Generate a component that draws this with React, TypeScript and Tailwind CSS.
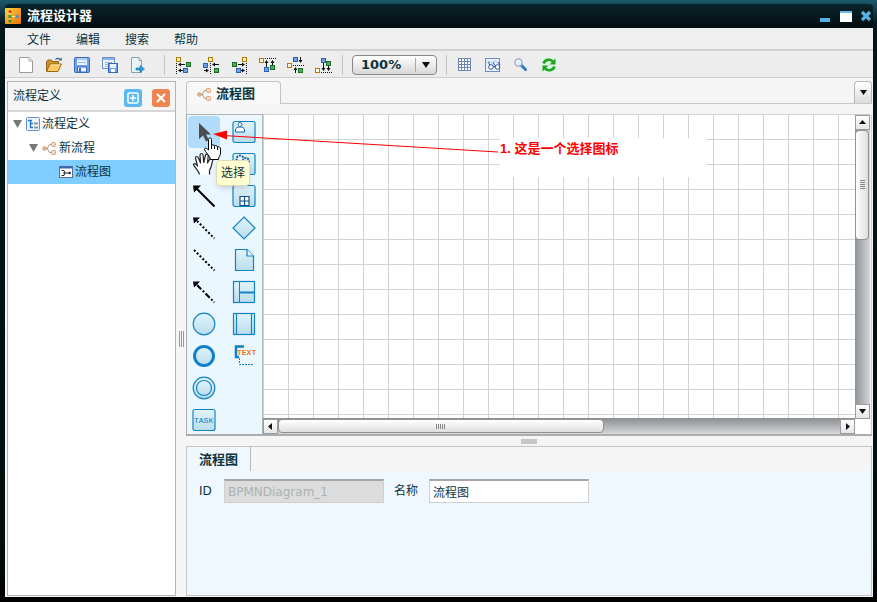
import type { ReactNode } from "react";

type Pt = [number, number];

/* ---------- toolbar drawings ---------- */

function Icon({ children, size = 16 }: { children: ReactNode; size?: number }) {
  return (
    <svg width={size} height={size} viewBox={`0 0 ${size} ${size}`} className="block shrink-0" aria-hidden="true">
      {children}
    </svg>
  );
}

function NewIcon() {
  return (
    <Icon>
      <path d="M1.500 .5H11L14.500 4V15.500H1.500Z" fill="#fff" stroke="#9a9a9a" />
      <path d="M11 .5V4H14.500" fill="#e8e8e8" stroke="#b0b0b0" />
    </Icon>
  );
}

function OpenIcon() {
  return (
    <Icon>
      <path d="M.5 14V4.500L2 3H5.500L7 4.500H12.500V7" fill="#c99227" stroke="#8f6414" />
      <path d="M.5 14.500L4 7H15.500L12 14.500Z" fill="#fbc95f" stroke="#96681a" />
      <path d="M4.800 8H14" stroke="#ffeab5" />
      <path d="M9.500 2.500C11 .8 13 .8 14.500 3" fill="none" stroke="#3d6490" strokeWidth="1.2" />
      <path d="M12.500 3.500H15.800V.5Z" fill="#3d6490" />
    </Icon>
  );
}

function SaveIcon() {
  return (
    <Icon>
      <rect x=".5" y=".5" width="15" height="15" rx="1" fill="#6fa2ee" stroke="#3a68bb" />
      <rect x="3" y="1" width="10" height="7" fill="#e8f3ff" />
      <rect x="3" y="1" width="10" height="2" fill="#a8cef8" />
      <path d="M4 5.500H12" stroke="#9cc0ee" />
      <rect x="3.500" y="10" width="9" height="5" fill="#f3f6fa" stroke="#3a68bb" />
      <rect x="5" y="11" width="2" height="4" fill="#3a68bb" />
    </Icon>
  );
}

function SaveAllIcon() {
  return (
    <Icon>
      <rect x=".5" y=".5" width="12" height="11" fill="#eaf4ff" stroke="#7192c8" />
      <path d="M1 2H12" stroke="#8bb1ea" strokeWidth="2" />
      <path d="M3 5.500H10M3 7.500H7M3 9.500H6" stroke="#9db4da" />
      <rect x="6.500" y="6.500" width="9" height="9" fill="#6c9ce8" stroke="#3c65b4" />
      <rect x="8" y="7" width="6" height="4" fill="#e9f3ff" />
      <rect x="9" y="12" width="4" height="3" fill="#fff" />
    </Icon>
  );
}

function ExportIcon() {
  return (
    <Icon>
      <path d="M1.500 .5H9L11.500 3V15.500H1.500Z" fill="#e9f4f6" stroke="#8aa0a8" />
      <path d="M9 .5V3.500H11.500" fill="#fff" stroke="#8aa0a8" />
      <path d="M6 11H10V8.500L14.500 12L10 15.500V13H6Z" fill="#2e9bdc" stroke="#1673ad" strokeWidth=".6" />
    </Icon>
  );
}

type AlignProps = { o: Pt; b: Pt; g: Pt; guide: string; shafts: string; heads: string };

function AlignIcon({ o, b, g, guide, shafts, heads }: AlignProps) {
  return (
    <Icon size={17}>
      <path d={guide} stroke="#111" strokeDasharray="1 1" />
      <path d={shafts} stroke="#111" />
      <path d={heads} fill="#111" />
      <rect x={o[0] + 0.5} y={o[1] + 0.5} width="4" height="4" fill="#fff8d8" stroke="#b87a00" />
      <rect x={b[0] + 0.5} y={b[1] + 0.5} width="4" height="4" fill="#6ea3ea" stroke="#2c5fae" />
      <rect x={g[0] + 0.5} y={g[1] + 0.5} width="4" height="4" fill="#4fae52" stroke="#1b6d25" />
    </Icon>
  );
}

const aligns: (AlignProps & { name: string })[] = [
  { name: "左对齐", o: [1, 0], g: [11, 5], b: [8, 11], guide: "M1.500 6V17", shafts: "M4 7.500H10M4 13.500H8", heads: "M3 7.500L6 5.500V9.500ZM3 13.500L6 11.500V15.500Z" },
  { name: "水平居中", o: [5, 0], b: [0, 6], g: [11, 11], guide: "M7.500 6V17", shafts: "M10 7.500H16M1 13.500H5", heads: "M9 7.500L12 5.500V9.500ZM6 13.500L3 11.500V15.500Z" },
  { name: "右对齐", o: [11, 0], g: [1, 5], b: [5, 11], guide: "M15.500 6V17", shafts: "M7 7.500H12M10 13.500H12", heads: "M14 7.500L11 5.500V9.500ZM14 13.500L11 11.500V15.500Z" },
  { name: "顶对齐", o: [0, 1], g: [11, 8], b: [5, 10], guide: "M6 1.500H17", shafts: "M7.500 4V10M13.500 4V8", heads: "M7.500 3L5.500 6H9.500ZM13.500 3L11.500 6H15.500Z" },
  { name: "垂直居中", o: [0, 6], b: [6, 0], g: [11, 11], guide: "M6 8.500H17", shafts: "M13.500 0V5M8.500 12V16", heads: "M13.500 6L11.500 3H15.500ZM8.500 10L6.500 13H10.500Z" },
  { name: "底对齐", o: [0, 11], b: [6, 1], g: [11, 4], guide: "M6 15.500H17", shafts: "M8.500 6V12M13.500 9V12", heads: "M8.500 14L6.500 11H10.500ZM13.500 14L11.500 11H15.500Z" },
];

function GridIcon() {
  return (
    <Icon>
      <rect x="1" y="1" width="13" height="13" fill="#fff" />
      <path d="M1.500 1V14M4.500 1V14M7.500 1V14M10.500 1V14M13.500 1V14M1 1.500H14M1 4.500H14M1 7.500H14M1 10.500H14M1 13.500H14" stroke="#6a86b4" />
    </Icon>
  );
}

function OverviewIcon() {
  return (
    <Icon>
      <rect x=".5" y="1.500" width="14" height="13" fill="#e8f3ff" stroke="#6d8cc4" />
      <path d="M1 6L4 4L7 6L10 3.500L13 6" fill="none" stroke="#a6c6ee" />
      <path d="M3.500 5L5 9M9 5C8 6 9 8 10.500 9M13 5L15 8" fill="none" stroke="#35569e" />
      <circle cx="6" cy="10" r="2.300" fill="#fff" stroke="#35569e" />
      <circle cx="12.500" cy="10" r="2.300" fill="#fff" stroke="#35569e" />
      <path d="M8 9.500H10.500" stroke="#35569e" />
    </Icon>
  );
}

function ZoomIcon() {
  return (
    <Icon>
      <path d="M8.500 8.500L12.500 12.500" stroke="#2f7cc0" strokeWidth="3" strokeLinecap="round" />
      <circle cx="5.500" cy="5.500" r="3.600" fill="#dff1ff" stroke="#9aa8b8" strokeWidth="1.300" />
      <path d="M3.500 5C4 3.800 5 3.500 6 3.500" fill="none" stroke="#fff" />
    </Icon>
  );
}

function RefreshIcon() {
  return (
    <Icon>
      <rect width="16" height="16" fill="#e3f3ea" />
      <path d="M2.500 6.500C4 2.500 9 1.500 12 4.500" fill="none" stroke="#1fa51c" strokeWidth="2.600" />
      <path d="M14.500 1.500V7.500H8.500Z" fill="#1fa51c" />
      <path d="M13.500 9.500C12 13.500 7 14.500 4 11.500" fill="none" stroke="#1fa51c" strokeWidth="2.600" />
      <path d="M1.500 14.500V8.500H7.500Z" fill="#1fa51c" />
    </Icon>
  );
}

/* ---------- tree and tab drawings ---------- */

function BranchIcon() {
  return (
    <Icon size={15}>
      <path d="M4 7.500H6M10 3.500H8C6 3.500 6.500 7.500 5 7.500C6.500 7.500 6 11.500 8 11.500H10" fill="none" stroke="#9a9a9a" />
      <circle cx="2.500" cy="7.500" r="1.800" fill="#f2b988" stroke="#c99a72" />
      <rect x="9.500" y="1.500" width="4" height="4" rx="1" fill="#fadcbc" stroke="#d6a078" />
      <rect x="9.500" y="9.500" width="4" height="4" rx="1" fill="#fadcbc" stroke="#d6a078" />
    </Icon>
  );
}

function DefinitionIcon() {
  return (
    <Icon size={14}>
      <rect x=".5" y=".5" width="13" height="13" rx="1" fill="#edf6ff" stroke="#668ccc" />
      <path d="M2 3.500H6M4.500 3V10.500H7M4.500 6.500H7" fill="none" stroke="#2677cf" strokeWidth="1.400" />
      <path d="M8 6.500H12M8 10.500H12" stroke="#8795a8" strokeWidth="2" />
    </Icon>
  );
}

function DiagramIcon() {
  return (
    <Icon size={14}>
      <rect x=".5" y="1.500" width="13" height="11" fill="#fff" stroke="#5b6d94" />
      <path d="M1 2.500H13" stroke="#3b66ae" strokeWidth="2" />
      <path d="M2.500 5.500H5L6 7.500L5 10.500H2.500M4 8H9" fill="none" stroke="#222" />
      <circle cx="10.500" cy="8" r="1.300" fill="#222" />
    </Icon>
  );
}

function Caret() {
  return (
    <svg width="9" height="8" viewBox="0 0 9 8" className="mr-0.5 block shrink-0" aria-hidden="true">
      <path d="M0 0H9L4.500 8Z" fill="#777" />
    </svg>
  );
}

/* ---------- palette drawings ---------- */

function Shape({ children }: { children: ReactNode }) {
  return (
    <svg width="24" height="24" viewBox="0 0 24 24" className="block" aria-hidden="true">
      <defs>
        <linearGradient id="face" x1="0" y1="0" x2="0" y2="1">
          <stop offset="0" stopColor="#e2f4fb" />
          <stop offset="1" stopColor="#b9ddec" />
        </linearGradient>
      </defs>
      {children}
    </svg>
  );
}

const edge = "#1583c2";
const box = <rect x="1" y="1.500" width="22" height="21" rx="2" fill="url(#face)" stroke={edge} strokeWidth="1.200" />;

const palette: { name: string; art: ReactNode }[] = [
  { name: "选择", art: <path d="M7 3V19L11 15.500L14 21.500L17 20L14 14.500H19Z" fill="#4c4c4c" /> },
  {
    name: "用户任务",
    art: (
      <>
        {box}
        <circle cx="8" cy="4.500" r="2" fill="#fff" stroke="#1a6ca4" />
        <path d="M3.500 12V10C3.500 8 5.500 7 8 7S12.500 8 12.500 10V12Z" fill="#fff" stroke="#1a6ca4" />
      </>
    ),
  },
  {
    name: "移动",
    art: (
      <path
        d="M7.500 22.500C7 19 2.500 15.500 1.500 12.500C2 11 4 11.500 5.500 14L3.500 6C3.500 4 5.800 4 6.500 6L8.500 11L8 3C8.500 1 10.800 1 11 3L11.800 10.500L13.500 3C14.500 1.500 16.500 2 16.200 4L15.500 11L18.500 6C20 5 21.500 6 21 7.500C19.500 11.500 20 15 17.500 18.500V22.500"
        fill="#fff"
        stroke="#222"
        strokeWidth="1.200"
        strokeLinejoin="round"
      />
    ),
  },
  {
    name: "服务任务",
    art: (
      <>
        {box}
        <circle cx="8" cy="7" r="3.500" fill="#e8f5fb" stroke="#1a5f8f" strokeWidth="2" strokeDasharray="2 1" />
        <circle cx="14" cy="9" r="3" fill="#e8f5fb" stroke="#1a5f8f" strokeWidth="2" strokeDasharray="2 1" />
      </>
    ),
  },
  {
    name: "顺序流",
    art: (
      <>
        <path d="M4 4L22.500 22.500" stroke="#000" strokeWidth="2" />
        <path d="M1 1.500H9L2 8.500Z" fill="#000" />
      </>
    ),
  },
  {
    name: "子流程",
    art: (
      <>
        {box}
        <path d="M8 12.500H17V21.500H8ZM12.500 12.500V21.500M8 17H17" fill="#fff" stroke="#164f8c" strokeWidth="1.200" />
      </>
    ),
  },
  {
    name: "消息流",
    art: (
      <>
        <path d="M5 5L22.500 22.500" stroke="#000" strokeWidth="2" strokeDasharray="2 2" />
        <path d="M1 1.500H8L2 7.500Z" fill="#000" />
      </>
    ),
  },
  { name: "网关", art: <path d="M12 1L23 12L12 23L1 12Z" fill="url(#face)" stroke={edge} strokeWidth="1.200" /> },
  { name: "关联", art: <path d="M2 2L22.500 22.500" stroke="#000" strokeWidth="2" strokeDasharray="2 2" /> },
  {
    name: "数据对象",
    art: (
      <>
        <path d="M3.500 1.500H15L21.500 8V22.500H3.500Z" fill="url(#face)" stroke={edge} strokeWidth="1.200" />
        <path d="M15 1.500V8H21.500" fill="#eaf8ff" stroke={edge} strokeWidth="1.200" />
      </>
    ),
  },
  {
    name: "条件流",
    art: (
      <>
        <path d="M5 5L22.500 22.500" stroke="#000" strokeWidth="2" strokeDasharray="6 2 2 2" />
        <path d="M1 1.500H8L2 7.500Z" fill="#000" />
      </>
    ),
  },
  {
    name: "泳道",
    art: (
      <>
        <rect x="1.500" y="1.500" width="21" height="21" fill="url(#face)" stroke={edge} strokeWidth="1.200" />
        <path d="M7.500 1.500V22.500" stroke={edge} />
        <path d="M7.500 12.500H22.500" stroke={edge} strokeWidth="2" />
      </>
    ),
  },
  { name: "开始事件", art: <circle cx="12" cy="12" r="10.800" fill="url(#face)" stroke={edge} strokeWidth="1.200" /> },
  {
    name: "泳池",
    art: (
      <>
        <rect x="1.500" y="1.500" width="21" height="21" fill="url(#face)" stroke={edge} strokeWidth="1.200" />
        <path d="M4.500 1.500V22.500M19.500 1.500V22.500" stroke={edge} strokeWidth="1.200" />
      </>
    ),
  },
  { name: "结束事件", art: <circle cx="12" cy="12" r="9.500" fill="url(#face)" stroke="#1180c4" strokeWidth="3" /> },
  {
    name: "文本注释",
    art: (
      <>
        <path d="M12 2.500H4V13H7" fill="none" stroke="#1180c4" strokeWidth="2.500" />
        <path d="M7.500 14V20.500H21" fill="none" stroke="#1180c4" strokeDasharray="2 1" />
        <text x="5" y="10.500" fontSize="8" fontWeight="700" fontFamily="Liberation Mono, monospace" fill="#ee7c1c">TEXT</text>
      </>
    ),
  },
  {
    name: "中间事件",
    art: (
      <>
        <circle cx="12" cy="12" r="10.800" fill="url(#face)" stroke={edge} strokeWidth="1.200" />
        <circle cx="12" cy="12" r="7.500" fill="url(#face)" stroke={edge} strokeWidth="1.200" />
      </>
    ),
  },
  { name: "", art: null },
  {
    name: "任务",
    art: (
      <>
        {box}
        <text x="2" y="15" fontSize="8" fontFamily="Liberation Mono, monospace" fill="#1180c4">TASK</text>
      </>
    ),
  },
];

/* ---------- scroll bars ---------- */

function ScrollButton({ label, d }: { label: string; d: string }) {
  return (
    <button aria-label={label} className="flex size-[15px] shrink-0 items-center justify-center border border-[#9b9b9b] bg-gradient-to-b from-white to-[#e6e6e6]">
      <svg width="7" height="7" viewBox="0 0 7 7" aria-hidden="true"><path d={d} fill="#111" /></svg>
    </button>
  );
}

function VScroll() {
  return (
    <div className="flex flex-col border-t border-[#c8c8c8] bg-gradient-to-r from-[#8f9396] to-[#d5d7d9]">
      <ScrollButton label="向上滚动" d="M3.500 1L7 5H0Z" />
      <div className="min-h-0 flex-1">
        <div className="flex h-[40%] w-[14px] items-center justify-center rounded-sm border border-[#909090] bg-gradient-to-r from-white to-[#dedede]">
          <span className="flex flex-col gap-px">
            {[0, 1, 2, 3, 4].map((i) => <i key={i} className="h-px w-[5px] bg-[#888]" />)}
          </span>
        </div>
      </div>
      <ScrollButton label="向下滚动" d="M0 1H7L3.500 6Z" />
    </div>
  );
}

function HScroll() {
  return (
    <div className="flex h-[15px] bg-gradient-to-b from-[#8f9396] to-[#d5d7d9]">
      <ScrollButton label="向左滚动" d="M5 0V7L1 3.500Z" />
      <div className="min-w-0 flex-1">
        <div className="flex h-[14px] w-[58%] items-center justify-center rounded-sm border border-[#909090] bg-gradient-to-b from-white to-[#dedede]">
          <span className="flex gap-px">
            {[0, 1, 2, 3, 4].map((i) => <i key={i} className="h-[5px] w-px bg-[#888]" />)}
          </span>
        </div>
      </div>
      <ScrollButton label="向右滚动" d="M2 0V7L6 3.500Z" />
    </div>
  );
}

function ToolButton({ label, children }: { label: string; children: ReactNode }) {
  return <button aria-label={label} className="flex h-6 w-7 shrink-0 items-center justify-center">{children}</button>;
}

function Divider({ className }: { className: string }) {
  return <span className={`h-5 w-px shrink-0 bg-[#c4c4c4] ${className}`} />;
}

/* ---------- page parts ---------- */

function TitleBar() {
  return (
    <header className="flex h-6 shrink-0 items-center rounded-t bg-gradient-to-b from-[#0a252b] to-[#020c10] pr-px">
      <svg width="16" height="16" viewBox="0 0 16 16" className="block" aria-hidden="true">
        <defs>
          <linearGradient id="logo" x1="0" y1="0" x2="1" y2="1">
            <stop offset="0" stopColor="#ffd23c" />
            <stop offset="1" stopColor="#e87408" />
          </linearGradient>
        </defs>
        <rect width="16" height="16" rx="1" fill="url(#logo)" />
        <path d="M5 3V13M5 8.500H12M5 5H2" stroke="#fbe9a0" />
        <circle cx="5" cy="3.500" r="1.500" fill="#d83a1a" />
        <rect x="3.500" y="7" width="3" height="3" fill="#3b9a35" />
        <circle cx="5" cy="13" r="1.500" fill="#2f8f3a" />
        <circle cx="12" cy="8.500" r="1.700" fill="#4795c8" />
      </svg>
      <h1 className="ml-1.5 flex-1 text-[13px] font-bold text-white">流程设计器</h1>
      <div className="flex items-center gap-2">
        <button aria-label="最小化" className="flex h-3 w-3 items-end"><i className="h-1 w-[10px] bg-[#4fb2ea]" /></button>
        <button aria-label="最大化" className="h-[11px] w-3 border-t-2 border-[#6db6e8] bg-white" />
        <button aria-label="关闭" className="size-3">
          <svg width="12" height="12" viewBox="0 0 12 12" className="block" aria-hidden="true"><path d="M2 2L10 10M10 2L2 10" stroke="#58b0e6" strokeWidth="3.200" /></svg>
        </button>
      </div>
    </header>
  );
}

function Toolbar() {
  return (
    <div role="toolbar" className="flex h-[27px] shrink-0 items-center border-b border-[#cfcfcf] bg-[#ededed] pt-0.5 pl-[7px]">
      <ToolButton label="新建"><NewIcon /></ToolButton>
      <ToolButton label="打开"><OpenIcon /></ToolButton>
      <ToolButton label="保存"><SaveIcon /></ToolButton>
      <ToolButton label="全部保存"><SaveAllIcon /></ToolButton>
      <ToolButton label="导出"><ExportIcon /></ToolButton>
      <Divider className="mr-1 ml-3" />
      {aligns.map(({ name, ...a }) => <ToolButton key={name} label={name}><AlignIcon {...a} /></ToolButton>)}
      <Divider className="mr-[9px] ml-[5px]" />
      <div className="relative h-5 w-[85px] shrink-0">
        <select aria-label="缩放" className="block h-5 w-full appearance-none rounded border border-[#888] bg-gradient-to-b from-white to-[#d8d8d8] pl-2 font-['DejaVu_Sans',Verdana,sans-serif] text-[13px] leading-[18px] font-bold text-[#0b333c]">
          <option>100%</option>
        </select>
        <svg width="22" height="20" viewBox="0 0 22 20" className="pointer-events-none absolute top-0 right-0" aria-hidden="true">
          <path d="M.5 3V17" stroke="#aaa" />
          <path d="M7 7H15L11 13Z" fill="#111" />
        </svg>
      </div>
      <Divider className="mr-1 ml-[9px]" />
      <ToolButton label="网格"><GridIcon /></ToolButton>
      <ToolButton label="概览"><OverviewIcon /></ToolButton>
      <ToolButton label="查找"><ZoomIcon /></ToolButton>
      <ToolButton label="刷新"><RefreshIcon /></ToolButton>
    </div>
  );
}

function Sidebar() {
  return (
    <aside className="flex w-[169px] shrink-0 flex-col border border-[#b4b4b4] bg-white">
      <div className="flex h-[30px] shrink-0 items-center border-b-2 border-[#d6d6d6] bg-[#f5f5f5] px-[5px]">
        <h2 className="flex-1">流程定义</h2>
        <button aria-label="添加" className="mt-[3px] mr-2.5 size-[18px]">
          <svg width="18" height="18" viewBox="0 0 18 18" className="block" aria-hidden="true">
            <rect width="18" height="18" rx="3" fill="#5bb8f4" />
            <rect x="4" y="4" width="10" height="10" rx="1" fill="none" stroke="#fff" strokeWidth="1.500" />
            <path d="M9 6V12M6 9H12" stroke="#fff" strokeWidth="1.500" />
          </svg>
        </button>
        <button aria-label="删除" className="mt-[3px] size-[18px]">
          <svg width="18" height="18" viewBox="0 0 18 18" className="block" aria-hidden="true">
            <rect width="18" height="18" rx="3" fill="#ee8450" />
            <path d="M5 5L13 13M13 5L5 13" stroke="#fff" strokeWidth="2.200" />
          </svg>
        </button>
      </div>
      <ul role="tree">
        <li role="treeitem" className="flex h-6 items-center gap-0.5 pl-[5px]"><Caret /><DefinitionIcon />流程定义</li>
        <li role="treeitem" className="flex h-6 items-center gap-0.5 pl-[21px]"><Caret /><BranchIcon />新流程</li>
        <li role="treeitem" aria-selected="true" className="flex h-6 items-center gap-0.5 bg-[#7fceff] pl-[51px]"><DiagramIcon />流程图</li>
      </ul>
    </aside>
  );
}

function Annotation() {
  return (
    <>
      <p className="absolute top-6 left-[313px] h-[39px] w-[206px] bg-white text-[13px] leading-[22px] font-bold text-[#f00]">1. 这是一个选择图标</p>
      <svg width="340" height="60" viewBox="0 0 340 60" className="pointer-events-none absolute top-0 left-0" aria-hidden="true">
        <path d="M36 21.500L311 38" stroke="#f00" />
        <path d="M26 20L40 16.500V25.500Z" fill="#f00" />
        <path
          d="M21.500 25.500C21.500 23.500 24.500 23.500 24.500 25.500V31.500C25 30.500 27 30.500 27.500 32C28.500 31 30 31.500 30.500 33C32 32.500 33.500 33 33.500 35V39C33.500 42 31.500 42.500 31.500 45.500H23.500C23.500 42.500 18 38 17.500 35.500C17.500 33.500 19.500 34 21.500 36Z"
          fill="#fff"
          stroke="#000"
        />
        <path d="M24.500 31V35M27.500 32V35M30.500 33V36" stroke="#000" />
      </svg>
      <div role="tooltip" className="absolute top-[46px] left-[29px] rounded-sm border border-[#dcdcb8] bg-[#ffffd2] px-1 py-[3px] leading-[18px] shadow-md">选择</div>
    </>
  );
}

function Workspace() {
  return (
    <main className="relative flex min-h-0 flex-1 border-b-2 border-l border-[#a9adaf]">
      <div className="h-full w-[76px] shrink-0 overflow-hidden border-t border-r border-[#b0b4b6] bg-[#eaf7ff] pt-px pl-px">
        <div className="grid grid-cols-[32px_32px] gap-x-2">
          {palette.map(({ name, art }, i) =>
            art ? (
              <button key={i} aria-label={name} className={`flex size-8 items-center justify-center ${i === 0 ? "rounded-sm bg-[#b2dcfa]" : ""}`}>
                <Shape>{art}</Shape>
              </button>
            ) : (
              <span key={i} />
            ),
          )}
        </div>
      </div>
      <div className="grid min-w-0 flex-1 grid-cols-[1fr_15px] grid-rows-[1fr_15px] border-r border-[#d0d0d0] pr-px">
        <div className="border-b border-[#8f9396] bg-white bg-[linear-gradient(#d2d2d2_1px,transparent_1px),linear-gradient(90deg,#d2d2d2_1px,transparent_1px)] bg-size-[25px_25px]" />
        <VScroll />
        <HScroll />
        <div className="bg-white" />
      </div>
      <Annotation />
    </main>
  );
}

function Properties() {
  const field = "h-6 w-40 border border-t-2 border-[#cfcfcf] border-t-[#a6a6a6] px-[3px]";
  return (
    <section className="flex h-[150px] shrink-0 flex-col border border-[#c4c4c4] bg-[#f0f8ff]">
      <div className="flex h-6 shrink-0 bg-[#f5f5f5]">
        <h2 className="flex items-center border-r border-[#b8b8b8] bg-[#f0f8ff] px-3 pt-0.5 text-[13px] font-bold">流程图</h2>
      </div>
      <form className="flex pt-2 pl-3">
        <label htmlFor="pid" className="w-[25px] font-['DejaVu_Sans',Verdana,sans-serif] leading-6">ID</label>
        <input id="pid" disabled defaultValue="BPMNDiagram_1" className={`${field} bg-[#dcdcdc] font-['DejaVu_Sans',Verdana,sans-serif] text-[#aab3b3]`} />
        <label htmlFor="pname" className="ml-2.5 w-[35px] leading-6">名称</label>
        <input id="pname" defaultValue="流程图" className={`${field} bg-white`} />
      </form>
    </section>
  );
}

export default function App() {
  return (
    <div className="flex h-screen flex-col bg-[linear-gradient(#1d5a6b,#03161a_4%,#02100f_90%,#000)] pt-1 pr-1 pb-[5px] pl-[5px] font-['Liberation_Sans','Noto_Sans_CJK_SC',sans-serif] text-[12px] leading-4 text-[#0b333c]">
      <TitleBar />
      <nav className="flex h-[23px] shrink-0 items-center gap-[25px] border-b-2 border-[#d2d2d2] bg-[#efefef] pt-[3px] pl-[22px]">
        {["文件", "编辑", "搜索", "帮助"].map((m) => <button key={m}>{m}</button>)}
      </nav>
      <Toolbar />
      <div className="flex min-h-0 flex-1 bg-[#f5f5f5] pt-[3px] pr-px pb-px pl-0.5">
        <Sidebar />
        <div className="flex w-2.5 shrink-0 items-center justify-center gap-px" aria-hidden="true">
          <i className="h-4 w-px bg-[#999]" />
          <i className="h-4 w-px bg-[#999]" />
          <i className="h-4 w-px bg-[#999]" />
        </div>
        <div className="flex min-w-0 flex-1 flex-col">
          <div className="flex h-[23px] shrink-0">
            <div role="tab" aria-selected="true" className="flex w-[95px] items-center gap-1 rounded-t border border-b-0 border-[#c2c2c2] bg-[#f8f8f8] pt-0.5 pl-2.5 text-[13px] font-bold">
              <BranchIcon />
              流程图
            </div>
            <div className="flex flex-1 justify-end border-b border-[#c8c8c8]">
              <button aria-label="打开的标签" className="flex w-[18px] items-center justify-center rounded-t border border-b-0 border-[#b8b8b8] bg-gradient-to-b from-white to-[#dcdcdc]">
                <svg width="7" height="5" viewBox="0 0 7 5" aria-hidden="true"><path d="M0 0H7L3.500 5Z" fill="#111" /></svg>
              </button>
            </div>
          </div>
          <div className="h-2.5 shrink-0 border-l border-[#c2c2c2]" />
          <Workspace />
          <div className="flex h-2.5 shrink-0 items-center justify-center" aria-hidden="true">
            <i className="h-[5px] w-4 bg-[#c6c6c6]" />
          </div>
          <Properties />
        </div>
      </div>
    </div>
  );
}
